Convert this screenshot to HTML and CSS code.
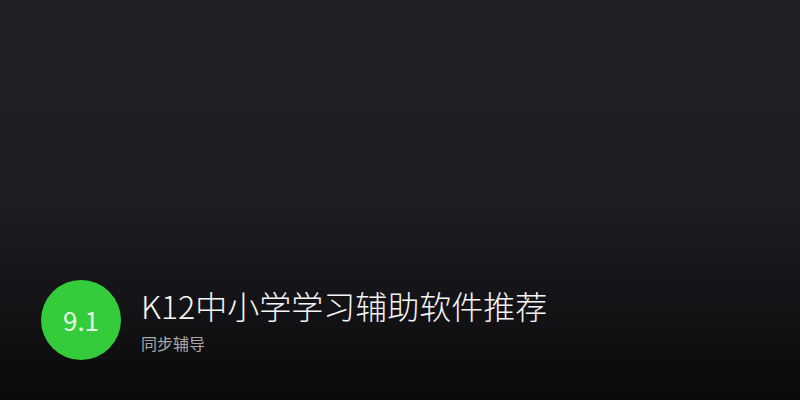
FILE: index.html
```html
<!DOCTYPE html>
<html lang="zh-CN">
<head>
    <meta charset="UTF-8">
    <meta name="viewport" content="width=device-width, initial-scale=1.0">
    <title>K12中小学学习辅助软件推荐</title>
    <link rel="stylesheet" href="styles.css">
</head>
<body>
    <div class="cover">
        <div class="info">
            <div class="score">9.1</div>
            <div class="text">
                <h1 class="title">K12中小学学习辅助软件推荐</h1>
                <p class="sub">同步辅导</p>
            </div>
        </div>
    </div>
</body>
</html>
```

FILE: styles.css
```css
*{
    padding: 0;
    margin: 0;
}
body{
    font-family: "Noto Sans CJK SC", "Noto Sans", sans-serif;
}
.cover{
    width: 800px;
    height: 400px;
    display: flex;
    flex-direction: column;
    justify-content: flex-end;
    padding: 0 0 40px 41px;
    box-sizing: border-box;
    background: linear-gradient(#202025 0%, #1e1d23 50%, #0a0a0b 100%);
}
.info{
    display: flex;
    align-items: center;
    gap: 20px;
}
.score{
    width: 80px;
    height: 80px;
    border-radius: 50%;
    background-color: #34cc3a;
    color: #e8f8e8;
    font-size: 26px;
    line-height: 80px;
    text-align: center;
}
.title{
    font-size: 32px;
    font-weight: 300;
    line-height: 36px;
    color: #f6f6f6;
}
.sub{
    margin-top: 10px;
    font-size: 16px;
    line-height: 20px;
    color: #a8a8a8;
}
```
